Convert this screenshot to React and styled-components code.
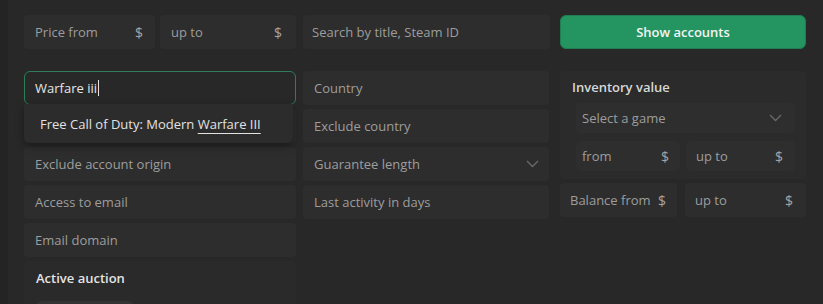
import React from "react";
import styled, { createGlobalStyle } from "styled-components";

const Global = createGlobalStyle`
  html, body { margin: 0; padding: 0; background: #242424; }
  body { font-family: "Open Sans", "Noto Sans", sans-serif; font-size: 13px; }
  * { box-sizing: border-box; }
`;

const Page = styled.div`
  margin-left: 8px;
  height: 304px;
  overflow: hidden;
  background: #282828;
  padding: 15px 17px 0 16px;
`;

const Grid = styled.div`
  display: grid;
  grid-template-columns: 279px 257px 246px;
  row-gap: 22px;
  align-items: start;
`;

const Cell = styled.div`
  width: ${(p) => p.$w}px;
`;

const Column = styled.div`
  width: ${(p) => p.$w}px;
  display: flex;
  flex-direction: column;
  gap: 4px;
  position: relative;
`;

const Field = styled.div`
  height: ${(p) => p.$h || 34}px;
  display: flex;
  align-items: center;
  justify-content: space-between;
  padding: 0 ${(p) => (p.$pr != null ? p.$pr : 11)}px 0 ${(p) => (p.$pl != null ? p.$pl : 11)}px;
  background: ${(p) => p.$bg || "#2d2d2d"};
  border-radius: 4px;
  color: #9d9d9d;
  white-space: nowrap;
  &&& {
    ${(p) => (p.$w ? `flex: 0 0 ${p.$w}px;` : "")}
  }
`;

const Pair = styled.div`
  display: flex;
  gap: ${(p) => p.$gap || 5}px;
  & > * {
    flex: 1 1 0;
  }
`;

const Dollar = styled.span`
  color: #a4a4a4;
  font-size: 14px;
`;

const Focused = styled.div`
  height: 34px;
  display: flex;
  align-items: center;
  padding: 0 10px;
  border: 1.5px solid #2f7b5b;
  border-radius: 6px;
  background: #282828;
  color: #e6e6e6;
`;

const Caret = styled.span`
  display: inline-block;
  width: 1px;
  height: 16px;
  background: #e6e6e6;
  margin-left: 1px;
`;

const FocusWrap = styled.div`
  position: relative;
  z-index: 2;
`;

const Dropdown = styled.div`
  position: absolute;
  left: 0;
  top: 33px;
  width: 269px;
  height: 39px;
  background: #2c2c2c;
  border-radius: 0 0 6px 6px;
  box-shadow: 0 3px 8px rgba(0, 0, 0, 0.35);
  display: flex;
  align-items: center;
  padding: 0 16px;
  color: #e2e2e2;
  white-space: nowrap;
`;

const Match = styled.span`
  text-decoration: underline;
  text-underline-offset: 4px;
  text-decoration-thickness: 1px;
`;

const Button = styled.button`
  width: 246px;
  height: 34px;
  border: 1px solid #1f7e51;
  border-radius: 6px;
  background: #249460;
  color: #f4f4f4;
  font-family: inherit;
  font-size: 13px;
  font-weight: 600;
  cursor: pointer;
`;

const Panel = styled.div`
  background: #2b2b2b;
  border-radius: 4px;
  padding: 0 11px 8px 16px;
  display: flex;
  flex-direction: column;
  gap: 8px;
`;

const PanelTitle = styled.div`
  height: 32px;
  display: flex;
  align-items: center;
  margin-left: -4px;
  color: #d8d8d8;
  font-weight: 600;
  margin-bottom: -8px;
`;

const Section = styled.div`
  background: #2a2a2a;
  border-radius: 4px;
  padding: 8px 12px 0;
  height: 60px;
`;

const SectionTitle = styled.div`
  color: #e4e4e4;
  font-weight: 600;
  height: 18px;
  line-height: 18px;
`;

const Pill = styled.div`
  margin-top: 14px;
  width: 98px;
  height: 28px;
  border-radius: 6px;
  background: #333333;
`;

const Chevron = () => (
  <svg width="13" height="8" viewBox="0 0 13 8" fill="none">
    <path d="M1 1l5.5 5.5L12 1" stroke="#6a6a6a" strokeWidth="1.3" />
  </svg>
);

export default function App() {
  return (
    <>
      <Global />
      <Page>
        <Grid>
          <Cell $w={272}>
            <Pair $gap={5}>
              <Field $w={131} $pr={12}>
                Price from<Dollar>$</Dollar>
              </Field>
              <Field $pr={14}>
                up to<Dollar>$</Dollar>
              </Field>
            </Pair>
          </Cell>
          <Cell $w={247}>
            <Field $pl={9}>Search by title, Steam ID</Field>
          </Cell>
          <Button>Show accounts</Button>

          <Column $w={272}>
            <FocusWrap>
              <Focused>
                Warfare iii<Caret />
              </Focused>
              <Dropdown>
                Free Call of Duty: Modern&nbsp;<Match>Warfare III</Match>
              </Dropdown>
            </FocusWrap>
            <Field aria-hidden="true" />
            <Field>Exclude account origin</Field>
            <Field>Access to email</Field>
            <Field>Email domain</Field>
            <Section>
              <SectionTitle>Active auction</SectionTitle>
              <Pill />
            </Section>
          </Column>

          <Column $w={246}>
            <Field>Country</Field>
            <Field>Exclude country</Field>
            <Field $pr={10}>
              Guarantee length
              <Chevron />
            </Field>
            <Field>Last activity in days</Field>
          </Column>

          <Column $w={246}>
            <Panel>
              <PanelTitle>Inventory value</PanelTitle>
              <Field $h={30} $bg="#2e2e2e" $pl={6} $pr={13}>
                Select a game
                <Chevron />
              </Field>
              <Pair $gap={6}>
                <Field $w={104} $h={30} $bg="#2e2e2e" $pl={6} $pr={11}>
                  from<Dollar>$</Dollar>
                </Field>
                <Field $h={30} $bg="#2e2e2e" $pl={10} $pr={12}>
                  up to<Dollar>$</Dollar>
                </Field>
              </Pair>
            </Panel>
            <Pair $gap={8}>
              <Field $w={117} $pl={10} $pr={11}>
                Balance from<Dollar>$</Dollar>
              </Field>
              <Field $pl={10} $pr={13}>
                up to<Dollar>$</Dollar>
              </Field>
            </Pair>
          </Column>
        </Grid>
      </Page>
    </>
  );
}
